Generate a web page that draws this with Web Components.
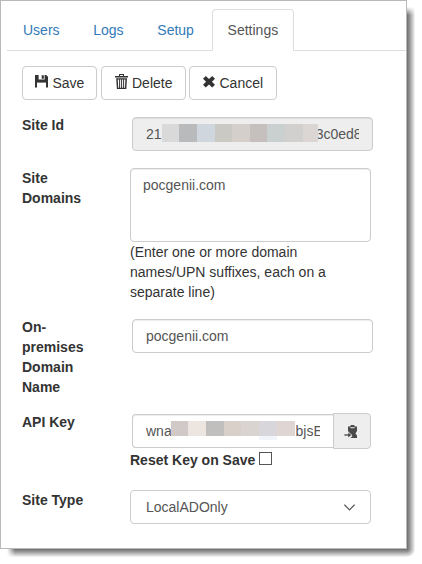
<!DOCTYPE html>
<html lang="en"><head><meta charset="utf-8"><title>Settings</title>
<style>
html,body{margin:0;background:#fff;overflow:hidden}
body{font:14px/20px "Liberation Sans",Arial,sans-serif;color:#333;width:422px;height:564px}
</style></head><body>
<app-window>
  <nav-tabs slot="tabs"><nav-tab>Users</nav-tab><nav-tab>Logs</nav-tab><nav-tab>Setup</nav-tab><nav-tab active>Settings</nav-tab></nav-tabs>
  <tool-bar slot="tools">
    <tool-button icon="save" style="width:75px">Save</tool-button>
    <tool-button icon="trash" style="width:85px;margin-right:3px">Delete</tool-button>
    <tool-button icon="remove" style="width:88px">Cancel</tool-button>
  </tool-bar>
  <form-row style="height:53px"><span slot="label">Site Id</span>
    <text-field inset readonly>21<mosaic-strip colors="#d9d9d9,#b9babb,#d0d6de,#cbc9c4,#d5cfcb,#c5c0be,#cacfcf,#d1d0cf,#dbd5d3" last="15"></mosaic-strip><span style="margin-left:-2px">3c0ed8</span></text-field>
  </form-row>
  <form-row style="height:149px"><span slot="label">Site Domains</span>
    <text-field multiline>pocgenii.com</text-field>
    <div>(Enter one or more domain names/UPN suffixes, each on a separate line)</div>
  </form-row>
  <form-row style="height:95px"><span slot="label">On-premises Domain Name</span>
    <text-field inset>pocgenii.com</text-field>
  </form-row>
  <form-row style="height:78px"><span slot="label">API Key</span>
    <key-field>wna<mosaic-strip colors="#d1c9c8,#ede5e0,#c0bfbd,#d9d1c9,#dad4d1,#d8d6da,#dfd5d2" last="18" tail></mosaic-strip><span style="margin-left:1px">bjsE</span></key-field>
    <check-line>Reset Key on Save</check-line>
  </form-row>
  <form-row style="height:40px"><span slot="label">Site Type</span>
    <select-field>LocalADOnly</select-field>
  </form-row>
</app-window>
<script>
const define=(name,html,setup)=>customElements.define(name,class extends HTMLElement{
  constructor(){super();this.attachShadow({mode:'open'}).innerHTML=html;}
  connectedCallback(){if(setup)setup(this,this.shadowRoot);}
});
define('app-window',`<style>
:host{display:block;position:relative;width:422px;height:564px}
.right,.bottom,.corner{position:absolute}
.right{left:407px;top:7px;width:8px;height:542px;background:linear-gradient(90deg,#6e6e6e,#8b8b8b 25%,#b5b5b5 55%,#e2e2e2 85%,#f6f6f6);-webkit-mask:linear-gradient(transparent,#000 8px)}
.bottom{left:7px;top:549px;width:400px;height:8px;background:linear-gradient(#6e6e6e,#8b8b8b 25%,#b5b5b5 55%,#e2e2e2 85%,#f6f6f6);-webkit-mask:linear-gradient(90deg,transparent,#000 8px)}
.corner{left:407px;top:549px;width:8px;height:8px;background:radial-gradient(circle at 0 0,#6e6e6e,#8b8b8b 2px,#b5b5b5 4px,#e2e2e2 7px,#fff 8px)}
.panel{position:relative;box-sizing:border-box;width:407px;height:549px;border:1px solid #b9b9b9;background:#fff;padding:8px 0 0 6px}
.body{padding:15px 0 0 15px}.rows{padding-top:15px}
</style><div class="right"></div><div class="bottom"></div><div class="corner"></div>
<div class="panel"><slot name="tabs"></slot><div class="body"><slot name="tools"></slot><div class="rows"><slot></slot></div></div></div>`);
define('nav-tabs',`<style>:host{display:flex;height:42px;box-sizing:border-box;border-bottom:1px solid #ddd}</style><slot></slot>`);
define('nav-tab',`<style>
:host{display:block;box-sizing:border-box;height:42px;padding:10px 15px;border:1px solid transparent;margin-right:1.7px;color:#337ab7}
:host([active]){color:#555;background:#fff;border-color:#ddd #ddd #fff;border-radius:4px 4px 0 0}
</style><slot></slot>`);
define('tool-bar',`<style>:host{display:flex}</style><slot></slot>`);
const icons={
save:'<path d="M0 0H3.6V4.6H9.6V0H11.2L13 1.8V12.5H11V7H2V12.5H0ZM6.7 .3H8.8V3.7H6.7Z"/><path d="M0 5H13V7.6H0Z"/>',
trash:'<path fill-rule="evenodd" d="M4 0H9V2H13V3.4H0V2H4ZM5.1 1V2H7.9V1ZM1.2 4.3H12L11.3 15H1.9ZM2.8 5.4L3.2 13.8H4.1V5.4ZM5.1 5.4V13.8H6.1V5.4ZM7.1 5.4V13.8H8.1V5.4ZM9.1 5.4V13.8H10L10.4 5.4Z"/>',
remove:'<path d="M2.8 0L6 3.1L9.2 0L12 2.8L8.9 5.7L12 8.7L9.2 11.5L6 8.4L2.8 11.5L0 8.7L3.1 5.7L0 2.8Z"/>'};
define('tool-button',`<style>
:host{display:flex;box-sizing:border-box;height:34px;padding:6px 0 6px 12px;border:1px solid #ccc;border-radius:4px;margin-right:4px;white-space:nowrap;background:#fff}
svg{width:13px;height:15px;margin-right:4.5px;fill:#333;flex:none}
:host([icon=save]) svg{margin-top:2px}:host([icon=trash]) svg{margin:1px 4px 0 1px}
:host([icon=remove]) svg{margin:3px 3.5px 0 1px}
</style><svg viewBox="0 0 13 15"></svg><slot></slot>`,(el,root)=>{root.querySelector('svg').innerHTML=icons[el.getAttribute('icon')];});
define('form-row',`<style>
:host{display:grid;grid-template-columns:78px 241px;column-gap:30px}
.label{font-weight:bold}.control{min-width:0}
</style><div class="label"><slot name="label"></slot></div><div class="control"><slot></slot></div>`);
define('text-field',`<style>
:host{display:flex;box-sizing:border-box;width:241px;height:34px;padding:6px 13px;border:1px solid #ccc;border-radius:4px;box-shadow:inset 0 1px 1px rgba(0,0,0,.075);color:#555;white-space:nowrap}
:host([inset]){margin:2px 0 0 2px}:host([readonly]){background:#eee}
:host([multiline]){height:74px;padding:6px 12px}
.clip{display:flex;overflow:hidden;width:213px;height:20px}
</style><div class="clip"><slot></slot></div>`);
define('mosaic-strip',`<style>:host{display:flex;position:relative;z-index:1;height:18px;flex:none}
i{display:block;width:17.65px;height:18px}
:host([tail]) i:nth-of-type(6){height:22px;background:linear-gradient(#d8d6da 18px,#f1f4f9 18px)!important}</style>`,(el,root)=>{
  const c=el.getAttribute('colors').split(',');
  c.forEach((v,n)=>{const i=document.createElement('i');i.style.background=v;if(n===c.length-1)i.style.width=el.getAttribute('last')+'px';root.append(i);});
});
define('key-field',`<style>
:host{display:flex;align-items:center;height:36px;padding:1px 0 0 2px;color:#555}
.input{box-sizing:border-box;flex:none;display:flex;width:201px;height:34px;padding:6px 13px;border:1px solid #ccc;border-right:0;border-radius:4px 0 0 4px;box-shadow:inset 0 1px 1px rgba(0,0,0,.075)}
.clip{display:flex;width:174px;height:22px;overflow:hidden}
::slotted(mosaic-strip){margin-top:-3px;margin-left:-1px}
.addon{box-sizing:border-box;flex:none;width:38px;height:36px;border:1px solid #ccc;border-radius:0 4px 4px 0;background:#eee;padding:11px 0 0 10px}
svg{display:block}
</style><div class="input"><div class="clip"><slot></slot></div></div><div class="addon">
<svg width="15" height="14" viewBox="0 0 15 14"><path fill="#4a4a4a" d="M4 1.5H6L7 0H10L11 1.5H13V13H6.5L8.5 11L5 7.5L4 6Z"/><path fill="#eee" d="M6 2.2H11L10.3 3.2H6.7ZM13 6L11.4 8.6L13 10.5Z"/><path fill="#4a4a4a" stroke="#eee" stroke-width=".7" d="M0 9H4V7L7.8 10L4 13V11H0Z"/></svg></div>`);
define('check-line',`<style>:host{display:flex;font-weight:bold;height:20px;padding-top:1px;white-space:nowrap}
i{box-sizing:border-box;width:13px;height:13px;border:1px solid #555;margin:2px 0 0 4px;background:#fff}</style><slot></slot><i></i>`);
define('select-field',`<style>:host{display:flex;justify-content:space-between;align-items:center;box-sizing:border-box;width:241px;height:34px;border:1px solid #ccc;border-radius:4px;padding:0 15px;color:#555}</style><slot></slot><svg width="11" height="7" viewBox="0 0 11 7" fill="none" stroke="#555" stroke-width="1.2"><path d="M.4.7L5.5 5.8L10.6.7"/></svg>`);
</script></body></html>
